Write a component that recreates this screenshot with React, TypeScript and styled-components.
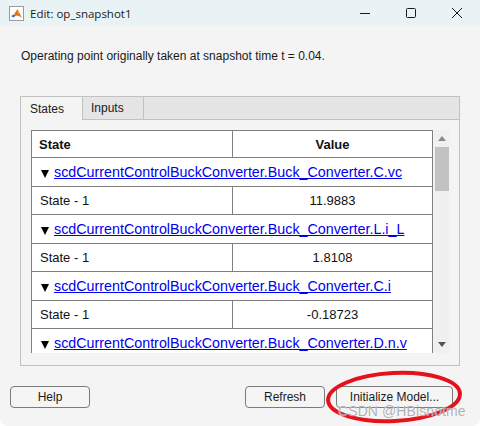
import React from "react";
import styled, { createGlobalStyle } from "styled-components";

const GlobalStyle = createGlobalStyle`
  html, body {
    margin: 0;
    padding: 0;
    background: #ffffff;
  }
  #root {
    width: 480px;
    height: 426px;
    overflow: hidden;
  }
`;

const Window = styled.div`
  position: relative;
  width: 480px;
  height: 426px;
  display: flex;
  flex-direction: column;
  background: #f4f4f4;
  border-radius: 0 0 8px 8px;
  overflow: hidden;
  font-family: "Liberation Sans", Arial, sans-serif;
  color: #1a1a1a;
`;

const TitleBar = styled.div`
  height: 26px;
  flex: none;
  display: flex;
  align-items: center;
  background: #e9f3f6;
`;

const AppIcon = styled.svg`
  margin-left: 9px;
  width: 15px;
  height: 15px;
  flex: none;
`;

const TitleText = styled.span`
  margin-left: 6px;
  font-family: "Open Sans", "Noto Sans", sans-serif;
  font-size: 11.5px;
  color: #1a1a1a;
  flex: 1;
`;

const WindowControls = styled.div`
  display: flex;
  height: 100%;
`;

const ControlButton = styled.div`
  width: 46px;
  height: 100%;
  display: flex;
  align-items: center;
  justify-content: center;
`;

const Content = styled.div`
  flex: 1;
  display: flex;
  flex-direction: column;
  padding-top: 22px;
`;

const Description = styled.p`
  margin: 0 0 0 21px;
  font-size: 12px;
  line-height: 16px;
  color: #1a1a1a;
`;

const TabPanel = styled.div`
  margin: 32px 0 0 20px;
  width: 440px;
  height: 270px;
  box-sizing: border-box;
  border: 1px solid #c2c2c2;
  display: flex;
  flex-direction: column;
`;

const TabStrip = styled.div`
  height: 22px;
  flex: none;
  display: flex;
  background: #e5e5e5;
  border-bottom: 1px solid #c2c2c2;
`;

const Tab = styled.div<{ $active?: boolean; $width: number }>`
  width: ${({ $width }) => $width}px;
  box-sizing: border-box;
  border-right: 1px solid #c2c2c2;
  display: flex;
  align-items: center;
  padding-left: ${({ $active }) => ($active ? 9 : 8)}px;
  font-size: 12px;
  color: #1a1a1a;
  background: ${({ $active }) => ($active ? "#f4f4f4" : "#e5e5e5")};
  margin-bottom: ${({ $active }) => ($active ? "-1px" : "0")};
  height: ${({ $active }) => ($active ? "23px" : "22px")};
`;

const TabBody = styled.div`
  flex: 1;
  padding: 10px 10px 11px 10px;
  display: flex;
`;

const Viewport = styled.div`
  width: 418px;
  height: 223px;
  display: flex;
  overflow: hidden;
`;

const Grid = styled.div`
  width: 402px;
  flex: none;
  box-sizing: border-box;
  border: 1px solid #808080;
  border-bottom: none;
  background: #ffffff;
  align-self: flex-start;
`;

const Row = styled.div<{ $height: number }>`
  display: flex;
  height: ${({ $height }) => $height}px;
  border-bottom: 1px solid #808080;
`;

const Cell = styled.div<{ $center?: boolean; $bold?: boolean; $first?: boolean }>`
  width: ${({ $first }) => ($first ? "201px" : "199px")};
  flex: none;
  box-sizing: border-box;
  border-right: ${({ $first }) => ($first ? "1px solid #808080" : "none")};
  display: flex;
  align-items: center;
  justify-content: ${({ $center }) => ($center ? "center" : "flex-start")};
  padding-left: ${({ $center, $bold }) => ($center ? 0 : $bold ? 7 : 8)}px;
  font-size: 13px;
  font-weight: ${({ $bold }) => ($bold ? 700 : 400)};
  color: #111111;
`;

const GroupCell = styled.div`
  flex: 1;
  display: flex;
  align-items: center;
  padding-left: 9px;
  gap: 5px;
`;

const Caret = styled.svg`
  width: 8px;
  height: 8px;
  flex: none;
  margin-top: 4px;
`;

const GroupLink = styled.a`
  font-size: 14.3px;
  color: #0000ee;
  text-decoration: underline;
  white-space: nowrap;
`;

const ScrollTrack = styled.div`
  width: 15px;
  margin-left: 1px;
  flex: none;
  background: #f0f0f0;
  display: flex;
  flex-direction: column;
  align-items: center;
`;

const ArrowBox = styled.div`
  height: 17px;
  width: 100%;
  display: flex;
  align-items: center;
  justify-content: center;
`;

const Thumb = styled.div`
  width: 14px;
  height: 44px;
  background: #c2c2c2;
`;

const TrackSpace = styled.div`
  flex: 1;
`;

const ButtonRow = styled.div`
  display: flex;
  margin: 20px 27px 0 10px;
  height: 22px;
`;

const ButtonGroup = styled.div`
  margin-left: auto;
  display: flex;
  gap: 11px;
`;

const Button = styled.button<{ $width: number }>`
  width: ${({ $width }) => $width}px;
  height: 22px;
  box-sizing: border-box;
  border: 1px solid #7a7a7a;
  border-radius: 4px;
  background: #f5f5f5;
  font-family: "Liberation Sans", Arial, sans-serif;
  font-size: 12px;
  color: #1a1a1a;
  padding: 0;
`;

const Annotation = styled.svg`
  position: absolute;
  left: 0;
  top: 0;
  width: 480px;
  height: 426px;
  pointer-events: none;
`;

const Watermark = styled.span`
  position: absolute;
  left: 338px;
  top: 403px;
  font-family: "Liberation Sans", Arial, sans-serif;
  font-size: 14px;
  color: rgba(150, 150, 150, 0.75);
  text-shadow: 0 0 1px #ffffff;
  letter-spacing: 0.1px;
`;

type Group = { path: string; value?: string };

// the last group is cut off by the scroll viewport, so its state row is not shown
const groups: Group[] = [
  { path: "scdCurrentControlBuckConverter.Buck_Converter.C.vc", value: "11.9883" },
  { path: "scdCurrentControlBuckConverter.Buck_Converter.L.i_L", value: "1.8108" },
  { path: "scdCurrentControlBuckConverter.Buck_Converter.C.i", value: "-0.18723" },
  { path: "scdCurrentControlBuckConverter.Buck_Converter.D.n.v" },
];

const MatlabIcon = () => (
  <AppIcon viewBox="0 0 15 15">
    <rect x="0.5" y="0.5" width="14" height="14" fill="#ffffff" stroke="#9a9a9a" />
    <path d="M2 10 L5 8.5 L7 9.5 L4.5 11.5 Z" fill="#2f6fc2" />
    <path d="M5 8.5 L8.5 3 L10.5 7 L13 12 L10 10 L7 9.5 Z" fill="#e0701e" />
    <path d="M8.5 3 L10.5 7 L9 8 Z" fill="#f3b04a" />
  </AppIcon>
);

const App = () => (
  <>
    <GlobalStyle />
    <Window>
      <TitleBar>
        <MatlabIcon />
        <TitleText>Edit: op_snapshot1</TitleText>
        <WindowControls>
          <ControlButton>
            <svg width="12" height="12" viewBox="0 0 12 12">
              <line x1="1" y1="6.5" x2="11" y2="6.5" stroke="#1a1a1a" strokeWidth="1" />
            </svg>
          </ControlButton>
          <ControlButton>
            <svg width="12" height="12" viewBox="0 0 12 12">
              <rect x="1.5" y="1.5" width="9" height="9" rx="1" fill="none" stroke="#1a1a1a" strokeWidth="1" />
            </svg>
          </ControlButton>
          <ControlButton>
            <svg width="12" height="12" viewBox="0 0 12 12">
              <path d="M1 1 L11 11 M11 1 L1 11" stroke="#1a1a1a" strokeWidth="1" />
            </svg>
          </ControlButton>
        </WindowControls>
      </TitleBar>

      <Content>
        <Description>Operating point originally taken at snapshot time t = 0.04.</Description>

        <TabPanel>
          <TabStrip>
            <Tab $active $width={62}>States</Tab>
            <Tab $width={61}>Inputs</Tab>
          </TabStrip>
          <TabBody>
            <Viewport>
              <Grid>
                <Row $height={26}>
                  <Cell $first $bold>State</Cell>
                  <Cell $center $bold>Value</Cell>
                </Row>
                {groups.map((g) => (
                  <React.Fragment key={g.path}>
                    <Row $height={28}>
                      <GroupCell>
                        <Caret viewBox="0 0 8 8">
                          <path d="M0 0 H8 L4 8 Z" fill="#000000" />
                        </Caret>
                        <GroupLink href="#">{g.path}</GroupLink>
                      </GroupCell>
                    </Row>
                    {g.value && (
                      <Row $height={27}>
                        <Cell $first>State - 1</Cell>
                        <Cell $center>{g.value}</Cell>
                      </Row>
                    )}
                  </React.Fragment>
                ))}
              </Grid>
              <ScrollTrack>
                <ArrowBox>
                  <svg width="8" height="5" viewBox="0 0 8 5">
                    <path d="M0 5 L4 0 L8 5 Z" fill="#8a8a8a" />
                  </svg>
                </ArrowBox>
                <Thumb />
                <TrackSpace />
                <ArrowBox>
                  <svg width="8" height="5" viewBox="0 0 8 5">
                    <path d="M0 0 L8 0 L4 5 Z" fill="#555555" />
                  </svg>
                </ArrowBox>
              </ScrollTrack>
            </Viewport>
          </TabBody>
        </TabPanel>

        <ButtonRow>
          <Button $width={80}>Help</Button>
          <ButtonGroup>
            <Button $width={80}>Refresh</Button>
            <Button $width={117}>Initialize Model...</Button>
          </ButtonGroup>
        </ButtonRow>
      </Content>

      <Annotation viewBox="0 0 480 426">
        <ellipse
          cx="394"
          cy="397"
          rx="66"
          ry="24"
          transform="rotate(-3 394 397)"
          fill="none"
          stroke="#e3121d"
          strokeWidth="4"
        />
      </Annotation>
      <Watermark>CSDN @HBisnotme</Watermark>
    </Window>
  </>
);

export default App;
